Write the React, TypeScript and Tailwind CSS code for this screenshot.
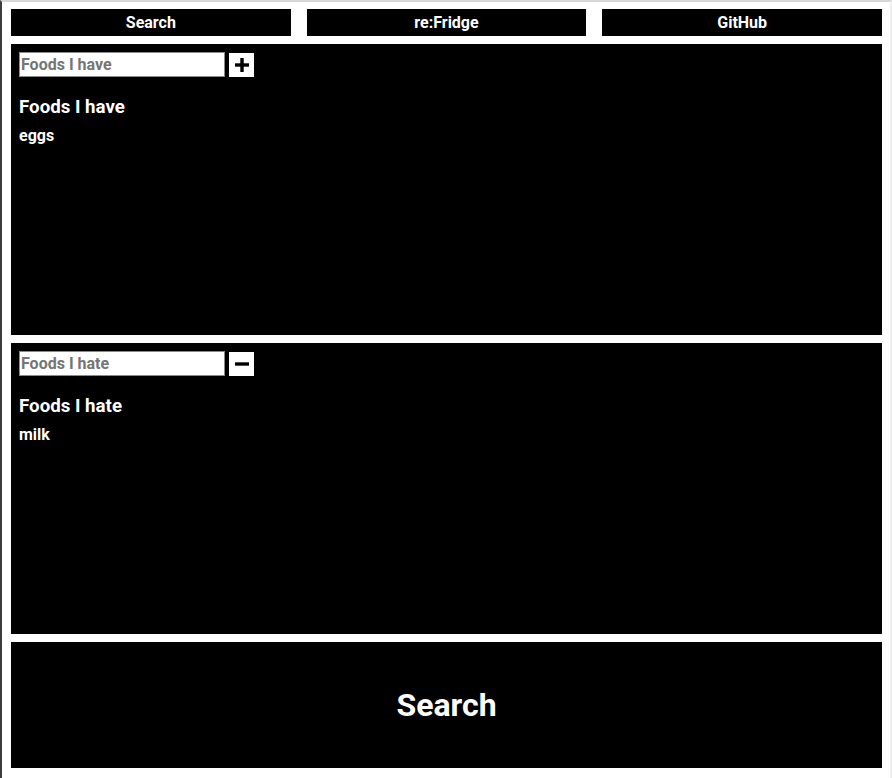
import { useState } from "react";

const font = { fontFamily: "Roboto, 'Noto Sans', sans-serif" };

function FoodPanel({ placeholder, title, items, sign }: { placeholder: string; title: string; items: string[]; sign: "+" | "-" }) {
  const [value, setValue] = useState("");
  return (
    <section className="h-[291px] bg-black p-2 text-white">
      <div className="flex items-center gap-1">
        <input
          value={value}
          onChange={(e) => setValue(e.target.value)}
          placeholder={placeholder}
          className="h-[25px] w-[206px] border border-[#8a8a8a] bg-white px-[1px] text-[16px] font-bold text-black outline-none placeholder:text-[#757575]"
        />
        <button className="flex h-[24px] w-[25px] items-center justify-center bg-white text-black">
          {sign === "+" ? (
            <svg width="14" height="14" viewBox="0 0 14 14">
              <rect x="5.3" y="0" width="3.4" height="14" fill="#000" />
              <rect x="0" y="5.3" width="14" height="3.4" fill="#000" />
            </svg>
          ) : (
            <svg width="14" height="14" viewBox="0 0 14 14">
              <rect x="0" y="5.3" width="14" height="3.4" fill="#000" />
            </svg>
          )}
        </button>
      </div>
      <h3 className="mt-[19px] text-[18.72px] font-bold leading-[23px]">{title}</h3>
      <ul className="mt-[6px]">
        {items.map((item) => (
          <li key={item} className="text-[16px] font-bold leading-[21px]">
            {item}
          </li>
        ))}
      </ul>
    </section>
  );
}

export default function App() {
  return (
    <div
      style={font}
      className="h-[778px] w-[892px] overflow-hidden border-l-2 border-r-2 border-t-2 border-l-[#3d3d3d] border-r-[#efefef] border-t-[#d6d6d6] bg-white"
    >
      <div className="flex flex-col gap-2 pl-[9px] pr-[8px] pt-[7px]">
        <nav className="grid h-[27px] grid-cols-3 gap-4">
          {["Search", "re:Fridge", "GitHub"].map((label) => (
            <a key={label} href="#" className="flex items-center justify-center bg-black text-[16px] font-bold text-white">
              {label}
            </a>
          ))}
        </nav>
        <FoodPanel placeholder="Foods I have" title="Foods I have" items={["eggs"]} sign="+" />
        <FoodPanel placeholder="Foods I hate" title="Foods I hate" items={["milk"]} sign="-" />
        <button className="flex h-[126px] items-center justify-center bg-black text-[32px] font-bold text-white">
          Search
        </button>
      </div>
    </div>
  );
}
